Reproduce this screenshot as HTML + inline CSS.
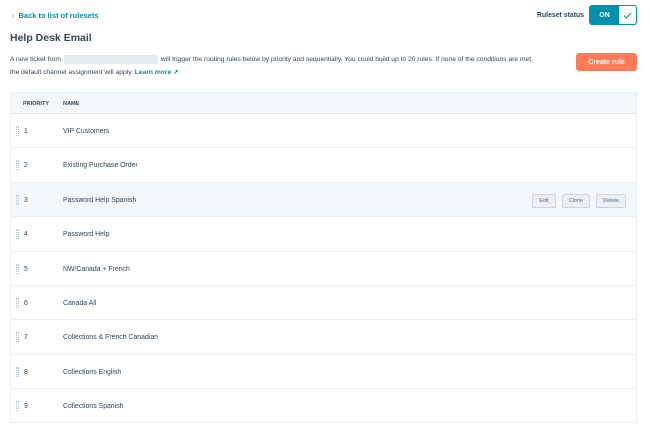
<!DOCTYPE html>
<html><head><style>
*{box-sizing:border-box;margin:0;padding:0}
body{width:650px;height:432px;background:#fff;font-family:"Liberation Sans",sans-serif;color:#33475b;position:relative;overflow:hidden}
.abs{position:absolute}
.back{left:12px;top:11px;font-size:7.5px;font-weight:bold;color:#0091ae}
.title{left:10px;top:32px;font-size:10.5px;font-weight:bold;color:#33475b}
.desc{left:10px;top:53px;font-size:6.7px;line-height:13px;color:#33475b;width:570px}
.blur{display:inline-block;width:94px;height:9px;background:#e8ebee;vertical-align:middle;margin:0 3px}
.link{color:#0091ae;font-weight:bold}
.status{left:537px;top:12px;font-size:6.9px;font-weight:bold}
.toggle{left:589px;top:5px;width:48px;height:20px;border:1px solid #0091ae;border-radius:3px;overflow:hidden;display:flex}
.on{width:29px;background:#0091ae;color:#fff;font-size:7px;font-weight:bold;display:flex;align-items:center;justify-content:center}
.create{left:576px;top:53px;width:61px;height:18px;background:#ff7a59;border-radius:3px;color:#fff;font-size:7px;font-weight:bold;display:flex;align-items:center;justify-content:center}
.table{left:10px;top:92px;width:627px;height:331px;border:1px solid #eaf0f6}
.head{height:21px;background:#f5f8fa;border-bottom:1px solid #dfe3eb;font-size:5.5px;font-weight:bold;position:relative}
.head span{position:absolute;top:8px}
.row{height:34.4px;border-bottom:1px solid #eaf0f6;position:relative;font-size:6.9px}
.row.hl{background:#f5f8fa}
.grip{position:absolute;left:5px;top:12px;width:3px;height:10px;border-left:1px dotted #b0c1d4;border-right:1px dotted #b0c1d4}
.num{position:absolute;left:13px;top:14px}
.name{position:absolute;left:52px;top:14px}
.btns{position:absolute;right:10px;top:11px;display:flex;gap:6px}
.btns div{border:1px solid #cbd6e2;background:#eaf0f6;border-radius:2px;font-size:5.5px;padding:3px 6px;color:#516f90}
</style></head><body>
<div class="abs back"><span style="color:#7c98b6;font-weight:normal;margin-right:4px">‹</span>Back to list of rulesets</div>
<div class="abs title">Help Desk Email</div>
<div class="abs desc">A new ticket from<span class="blur"></span>will trigger the routing rules below by priority and sequentially. You could build up to 20 rules. If none of the conditions are met,<br>the default channel assignment will apply. <span class="link">Learn more ↗</span></div>
<div class="abs status">Ruleset status</div>
<div class="abs toggle"><div class="on">ON</div><div style="flex:1;display:flex;align-items:center;justify-content:center"><svg width="9" height="7" viewBox="0 0 9 7"><path d="M1 3.5L3.3 6L8 1" stroke="#0091ae" stroke-width="1.1" fill="none"/></svg></div></div>
<div class="abs create">Create rule</div>
<div class="abs table">
<div class="head"><span style="left:12px">PRIORITY</span><span style="left:52px">NAME</span></div>
<div class="row"><div class="grip"></div><div class="num">1</div><div class="name">VIP Customers</div></div>
<div class="row"><div class="grip"></div><div class="num">2</div><div class="name">Existing Purchase Order</div></div>
<div class="row hl"><div class="grip"></div><div class="num">3</div><div class="name">Password Help Spanish</div><div class="btns"><div>Edit</div><div>Clone</div><div>Delete</div></div></div>
<div class="row"><div class="grip"></div><div class="num">4</div><div class="name">Password Help</div></div>
<div class="row"><div class="grip"></div><div class="num">5</div><div class="name">NW/Canada + French</div></div>
<div class="row"><div class="grip"></div><div class="num">6</div><div class="name">Canada All</div></div>
<div class="row"><div class="grip"></div><div class="num">7</div><div class="name">Collections &amp; French Canadian</div></div>
<div class="row"><div class="grip"></div><div class="num">8</div><div class="name">Collections English</div></div>
<div class="row" style="border-bottom:none"><div class="grip"></div><div class="num">9</div><div class="name">Collections Spanish</div></div>
</div>
</body></html>
